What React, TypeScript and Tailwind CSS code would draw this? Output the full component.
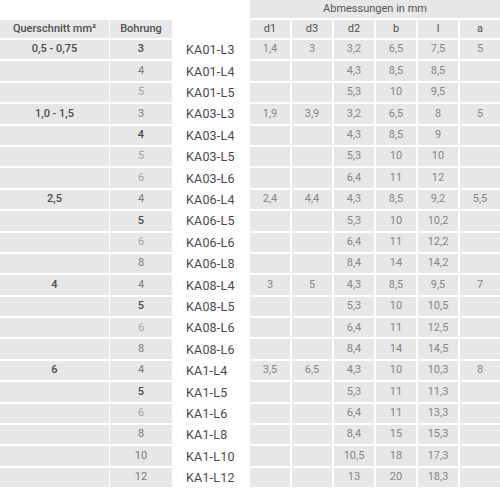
import React from 'react';

type Row = {
  q?: string;
  bohr: string;
  w: 'b' | 'n' | 'l';
  code: string;
  d1?: string;
  d3?: string;
  d2: string;
  b: string;
  l: string;
  a?: string;
};

const rows: Row[] = [
  { q: '0,5 - 0,75', bohr: '3', w: 'b', code: 'KA01-L3', d1: '1,4', d3: '3', d2: '3,2', b: '6,5', l: '7,5', a: '5' },
  { bohr: '4', w: 'n', code: 'KA01-L4', d2: '4,3', b: '8,5', l: '8,5' },
  { bohr: '5', w: 'l', code: 'KA01-L5', d2: '5,3', b: '10', l: '9,5' },
  { q: '1,0 - 1,5', bohr: '3', w: 'n', code: 'KA03-L3', d1: '1,9', d3: '3,9', d2: '3,2', b: '6,5', l: '8', a: '5' },
  { bohr: '4', w: 'b', code: 'KA03-L4', d2: '4,3', b: '8,5', l: '9' },
  { bohr: '5', w: 'l', code: 'KA03-L5', d2: '5,3', b: '10', l: '10' },
  { bohr: '6', w: 'l', code: 'KA03-L6', d2: '6,4', b: '11', l: '12' },
  { q: '2,5', bohr: '4', w: 'n', code: 'KA06-L4', d1: '2,4', d3: '4,4', d2: '4,3', b: '8,5', l: '9,2', a: '5,5' },
  { bohr: '5', w: 'b', code: 'KA06-L5', d2: '5,3', b: '10', l: '10,2' },
  { bohr: '6', w: 'l', code: 'KA06-L6', d2: '6,4', b: '11', l: '12,2' },
  { bohr: '8', w: 'n', code: 'KA06-L8', d2: '8,4', b: '14', l: '14,2' },
  { q: '4', bohr: '4', w: 'n', code: 'KA08-L4', d1: '3', d3: '5', d2: '4,3', b: '8,5', l: '9,5', a: '7' },
  { bohr: '5', w: 'b', code: 'KA08-L5', d2: '5,3', b: '10', l: '10,5' },
  { bohr: '6', w: 'l', code: 'KA08-L6', d2: '6,4', b: '11', l: '12,5' },
  { bohr: '8', w: 'n', code: 'KA08-L6', d2: '8,4', b: '14', l: '14,5' },
  { q: '6', bohr: '4', w: 'n', code: 'KA1-L4', d1: '3,5', d3: '6,5', d2: '4,3', b: '10', l: '10,3', a: '8' },
  { bohr: '5', w: 'b', code: 'KA1-L5', d2: '5,3', b: '11', l: '11,3' },
  { bohr: '6', w: 'l', code: 'KA1-L6', d2: '6,4', b: '11', l: '13,3' },
  { bohr: '8', w: 'n', code: 'KA1-L8', d2: '8,4', b: '15', l: '15,3' },
  { bohr: '10', w: 'n', code: 'KA1-L10', d2: '10,5', b: '18', l: '17,3' },
  { bohr: '12', w: 'n', code: 'KA1-L12', d2: '13', b: '20', l: '18,3' },
];

const cols = 'grid grid-cols-[109px_63px_76px_repeat(6,42px)]';
const cell = 'flex items-center justify-center bg-[#e7e7e7] border-b-2 border-white';
const num = `${cell} border-l-2 text-[11px] text-[#858585]`;

const bohrStyle = {
  b: 'font-medium text-[#4a4a4a]',
  n: 'text-[#7a7a7a]',
  l: 'text-[#a3a3a3]',
};

const App: React.FC = () => {
  return (
    <div className="w-[500px] h-[500px] bg-white overflow-hidden font-['Roboto',sans-serif]">
      {/* top header */}
      <div className={`${cols} h-[20px]`}>
        <div className="col-span-3" />
        <div className={`${cell} col-span-6 border-l-2 text-[11px] text-[#555]`}>Abmessungen in mm</div>
      </div>
      <div className={`${cols} h-[20px]`}>
        <div className={`${cell} text-[11px] font-medium text-[#505050]`}>Querschnitt mm²</div>
        <div className={`${cell} border-l text-[11px] font-medium text-[#505050]`}>Bohrung</div>
        <div />
        {['d1', 'd3', 'd2', 'b', 'l', 'a'].map((h) => (
          <div key={h} className={`${cell} border-l-2 text-[11px] text-[#505050]`}>{h}</div>
        ))}
      </div>

      {/* data rows */}
      {rows.map((r, i) => (
        <div key={i} className={`${cols} h-[21.4px]`}>
          <div className={`${cell} text-[11px] font-medium text-[#4a4a4a]`}>{r.q}</div>
          <div className={`${cell} border-l text-[11px] ${bohrStyle[r.w]}`}>{r.bohr}</div>
          <div className="flex items-center pl-[14px] text-[12.5px] text-[#4a4a4a] tracking-[0.2px]">{r.code}</div>
          <div className={num}>{r.d1}</div>
          <div className={num}>{r.d3}</div>
          <div className={num}>{r.d2}</div>
          <div className={num}>{r.b}</div>
          <div className={num}>{r.l}</div>
          <div className={num}>{r.a}</div>
        </div>
      ))}
    </div>
  );
};

export default App;
